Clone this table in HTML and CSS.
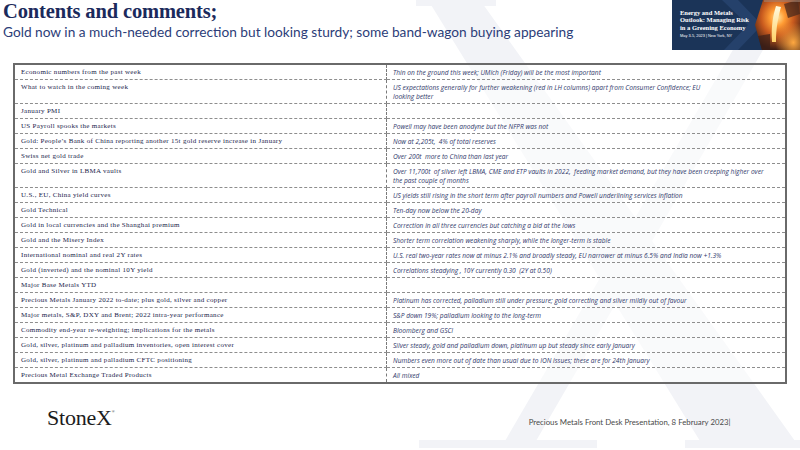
FILE: index.html
```html
<!DOCTYPE html>
<html lang="en">
<head>
<meta charset="utf-8">
<title>Contents and comments</title>
<link rel="stylesheet" href="styles.css">
</head>
<body>
<div class="slide">
  <svg class="watermark" width="800" height="450" viewBox="0 0 800 450" aria-hidden="true">
    <polygon points="428,0 480,0 795,441 700,441" />
    <polygon points="762,0 792,0 536,441 505,441" />
    <rect x="419" y="440" width="178" height="8" />
    <rect x="685" y="440" width="115" height="8" />
    <rect x="416" y="0" width="80" height="6" />
  </svg>

  <header class="head">
    <div class="titles">
      <h1 class="title">Contents and comments;</h1>
      <p class="subtitle">Gold now in a much-needed correction but looking sturdy; some band-wagon buying appearing</p>
    </div>
    <div class="banner">
      <svg class="banner-art" width="128" height="50" viewBox="0 0 128 50" aria-hidden="true">
        <defs>
          <radialGradient id="glow" cx="0.5" cy="0.35" r="0.65">
            <stop offset="0" stop-color="#ffe39a"/>
            <stop offset="0.25" stop-color="#ff9c34"/>
            <stop offset="0.55" stop-color="#c85a1e"/>
            <stop offset="1" stop-color="#3c1d14"/>
          </radialGradient>
          <radialGradient id="glow2" cx="0.85" cy="0.85" r="0.4">
            <stop offset="0" stop-color="#ffa840"/>
            <stop offset="1" stop-color="#ffa840" stop-opacity="0"/>
          </radialGradient>
          <linearGradient id="stream" x1="0" y1="0" x2="0" y2="1">
            <stop offset="0" stop-color="#fffbe0"/>
            <stop offset="1" stop-color="#ffd066"/>
          </linearGradient>
        </defs>
        <polygon points="50,0 66,0 90,25 66,50 52,50 76,25" fill="#25416b"/>
        <polygon points="91,0 128,0 128,50 90,50 83,25" fill="url(#glow)"/>
        <polygon points="91,0 128,0 128,50 90,50 83,25" fill="url(#glow2)"/>
        <polygon points="112,4 126,0 128,14 116,18" fill="#4a2a1c" opacity="0.75"/>
        <polygon points="86,36 98,34 98,50 90,50" fill="#3a2018" opacity="0.7"/>
        <path d="M104 6 C 101 16, 99 26, 100 42 L 104 42 C 104 28, 106 18, 109 7 Z" fill="url(#stream)"/>
        <rect x="92" y="0" width="36" height="2" fill="#a08070" opacity="0.6"/>
      </svg>
      <div class="banner-text">
        <p class="banner-title">Energy and Metals<br>Outlook: Managing Risk<br>in a Greening Economy</p>
        <p class="banner-date">May 3-5, 2023 | New York, NY</p>
      </div>
    </div>
  </header>

  <table class="contents">
    <tbody>
      <tr><td class="topic">Economic numbers from the past week</td><td class="note">Thin on the ground this week; UMich (Friday) will be the most important</td></tr>
      <tr><td class="topic">What to watch in the coming week</td><td class="note">US expectations generally for further weakening (red in LH columns) apart from Consumer Confidence; EU<br>looking better</td></tr>
      <tr><td class="topic">January PMI</td><td class="note">&nbsp;</td></tr>
      <tr><td class="topic">US Payroll spooks the markets</td><td class="note">Powell may have been anodyne but the NFPR was not</td></tr>
      <tr><td class="topic">Gold: People’s Bank of China reporting another 15t gold reserve increase in January</td><td class="note">Now at 2,205t,&nbsp; 4% of total reserves</td></tr>
      <tr><td class="topic">Swiss net gold trade</td><td class="note">Over 200t&nbsp; more to China than last year</td></tr>
      <tr><td class="topic">Gold and Silver in LBMA vaults</td><td class="note">Over 11,700t&nbsp; of silver left LBMA, CME and ETP vaults in 2022,&nbsp; feeding market demand, but they have been creeping higher over<br>the past couple of months</td></tr>
      <tr><td class="topic">U.S., EU, China yield curves</td><td class="note">US yields still rising in the short term after payroll numbers and Powell underlining services inflation</td></tr>
      <tr><td class="topic">Gold Technical</td><td class="note">Ten-day now below the 20-day</td></tr>
      <tr><td class="topic">Gold in local currencies and the Shanghai premium</td><td class="note">Correction in all three currencies but catching a bid at the lows</td></tr>
      <tr><td class="topic">Gold and the Misery Index</td><td class="note">Shorter term correlation weakening sharply, while the longer-term is stable</td></tr>
      <tr><td class="topic">International nominal and real 2Y rates</td><td class="note">U.S. real two-year rates now at minus 2.1% and broadly steady, EU narrower at minus 6.5% and India now +1.3%</td></tr>
      <tr><td class="topic">Gold (inverted) and the nominal 10Y yield</td><td class="note">Correlations steadying , 10Y currently 0.30&nbsp; (2Y at 0.50)</td></tr>
      <tr><td class="topic">Major Base Metals YTD</td><td class="note">&nbsp;</td></tr>
      <tr><td class="topic">Precious Metals January 2022 to-date; plus gold, silver and copper</td><td class="note">Platinum has corrected, palladium still under pressure; gold correcting and silver mildly out of favour</td></tr>
      <tr><td class="topic">Major metals, S&amp;P, DXY and Brent; 2022 intra-year performance</td><td class="note">S&amp;P down 19%; palladium looking to the long-term</td></tr>
      <tr><td class="topic">Commodity end-year re-weighting; implications for the metals</td><td class="note">Bloomberg and GSCI</td></tr>
      <tr><td class="topic">Gold, silver, platinum and palladium inventories, open interest cover</td><td class="note">Silver steady, gold and palladium down, platinum up but steady since early January</td></tr>
      <tr><td class="topic">Gold, silver, platinum and palladium CFTC positioning</td><td class="note">Numbers even more out of date than usual due to ION issues; these are for 24th January</td></tr>
      <tr><td class="topic">Precious Metal Exchange Traded Products</td><td class="note">All mixed</td></tr>
    </tbody>
  </table>

  <footer class="foot">
    <div class="logo">StoneX<span class="reg">®</span></div>
    <div class="footnote">Precious Metals Front Desk Presentation, 8 February 2023|</div>
  </footer>
</div>
</body>
</html>
```

FILE: styles.css
```css
html, body {
  margin: 0;
  padding: 0;
  background: #ffffff;
}

.slide {
  position: relative;
  width: 800px;
  height: 450px;
  overflow: hidden;
  background: #ffffff;
}

.watermark {
  position: absolute;
  left: 0;
  top: 0;
  fill: #f2f3f7;
  z-index: 0;
}

.head {
  position: relative;
  z-index: 1;
  display: flex;
  align-items: flex-start;
  height: 50px;
}

.titles {
  padding-left: 3px;
}

.title {
  margin: 0;
  font-family: "Liberation Serif", serif;
  font-weight: bold;
  font-size: 20.5px;
  line-height: 22px;
  color: #1b2a5c;
  letter-spacing: -0.15px;
}

.subtitle {
  margin: 2px 0 0;
  font-family: Lato, "Liberation Sans", sans-serif;
  font-size: 13.7px;
  line-height: 16px;
  color: #2c3d78;
}

.banner {
  position: relative;
  margin-left: auto;
  width: 128px;
  height: 50px;
  background: #1b3458;
  overflow: hidden;
}

.banner-art {
  position: absolute;
  left: 0;
  top: 0;
}

.banner-text {
  position: relative;
  padding: 9px 0 0 8px;
  color: #ffffff;
}

.banner-title {
  margin: 0;
  font-family: "Liberation Serif", serif;
  font-size: 6.5px;
  line-height: 7.4px;
  font-weight: bold;
}

.banner-date {
  margin: 2px 0 0;
  font-family: "Liberation Sans", sans-serif;
  font-size: 3.9px;
  line-height: 5px;
}

.contents {
  position: relative;
  z-index: 1;
  margin: 13px 0 0 13px;
  width: 774px;
  border-collapse: collapse;
  border: 2px solid #6a6a6a;
  background: rgba(255, 255, 255, 0.55);
  table-layout: fixed;
}

.contents td {
  vertical-align: top;
  padding: 3px 6px 2px;
  border-bottom: 1px dashed #8e8e8e;
  line-height: 9px;
  height: 9px;
  white-space: nowrap;
}

.topic {
  width: 359px;
  border-right: 1px dashed #7a7a7a;
  font-family: "Liberation Serif", serif;
  font-size: 7px;
  letter-spacing: 0.3px;
  color: #181c4a;
}

.note {
  font-family: "Open Sans", "Liberation Sans", sans-serif;
  font-style: italic;
  font-size: 6.6px;
  color: #2f376a;
}

.foot {
  position: relative;
  z-index: 1;
  display: flex;
  align-items: baseline;
  margin-top: 16px;
}

.logo {
  margin-left: 47px;
  font-family: "Liberation Serif", serif;
  font-size: 22px;
  line-height: 24px;
  color: #1c1c1c;
  letter-spacing: -0.2px;
}

.reg {
  font-size: 4px;
  vertical-align: 12px;
}

.footnote {
  margin-left: 414px;
  font-family: Lato, "Liberation Sans", sans-serif;
  font-size: 7.8px;
  color: #4a4a4a;
}
```
